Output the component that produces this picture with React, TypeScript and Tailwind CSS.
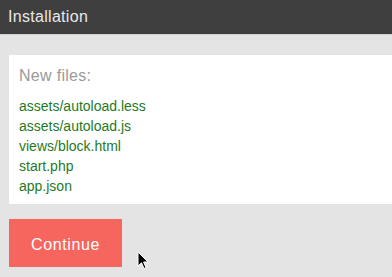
import React from "react";

export default function App() {
  const files = [
    "assets/autoload.less",
    "assets/autoload.js",
    "views/block.html",
    "start.php",
    "app.json",
  ];
  return (
    <div
      className="relative w-[392px] h-[277px] overflow-hidden bg-[#e4e4e4]"
      style={{ fontFamily: '"Helvetica Neue", "Liberation Sans", Arial, sans-serif' }}
    >
      <div className="h-[35px] bg-[#3f3f3f] border-b border-[#cfcfcf] flex items-center px-[8px]">
        <span className="text-[16px] text-[#e8e8e8] tracking-[0.3px]">Installation</span>
      </div>
      <div className="pl-[9px] pt-[20px]">
        <div className="bg-white h-[149px] pl-[10px] pt-[11px]">
          <div className="text-[16px] text-[#9a9a9a] leading-[20px] tracking-[0.3px]">New files:</div>
          <div className="mt-[10px]">
            {files.map((f) => (
              <div key={f} className="text-[14px] leading-[20px] text-[#1f7a1f]">
                {f}
              </div>
            ))}
          </div>
        </div>
        <div className="mt-[15px] w-[113px] h-[48px] bg-[#f7665e] flex items-center justify-center pt-[3px]">
          <span className="text-[16px] text-white tracking-[0.6px]">Continue</span>
        </div>
      </div>
      <svg
        className="absolute left-[137px] top-[251px]"
        width="14"
        height="20"
        viewBox="0 0 14 20"
      >
        <path
          d="M1 1 L1 15 L4.5 11.8 L7 17.5 L9 16.6 L6.6 11 L11 11 Z"
          fill="#000"
          stroke="#fff"
          strokeWidth="1"
          strokeLinejoin="round"
        />
      </svg>
    </div>
  );
}
